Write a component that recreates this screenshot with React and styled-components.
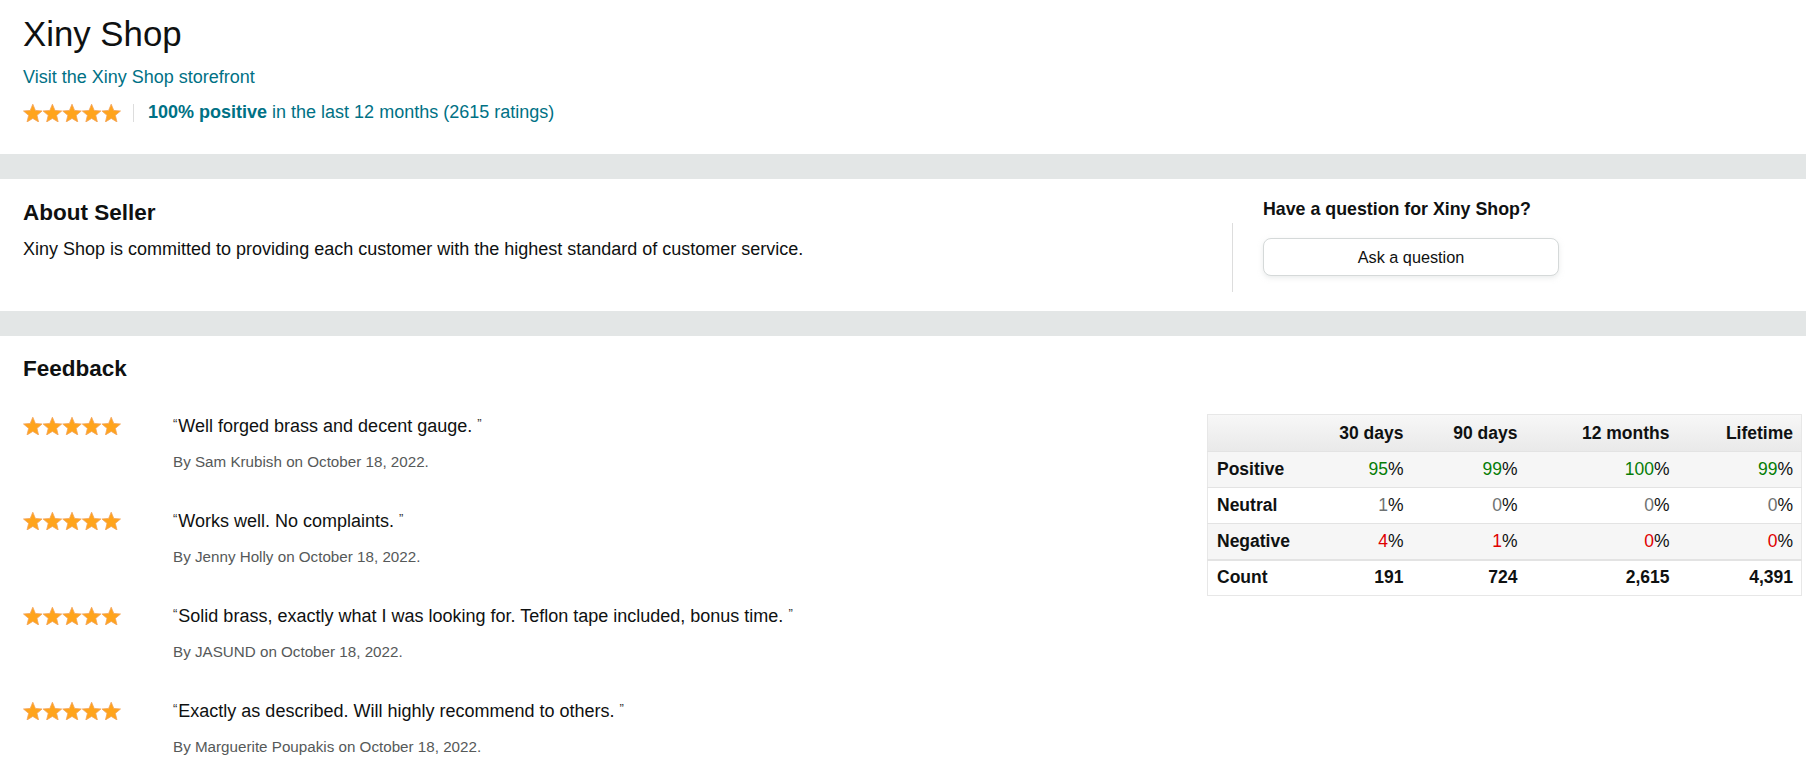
import React from 'react';
import styled, { createGlobalStyle } from 'styled-components';

const GlobalStyle = createGlobalStyle`
  html, body { margin: 0; padding: 0; background: #fff; }
  body {
    font-family: "Liberation Sans", Arial, sans-serif;
    color: #0f1111;
    font-size: 18px;
    line-height: 25px;
  }
  * { box-sizing: border-box; }
`;

const Page = styled.div`
  width: 100%;
`;

const Header = styled.header`
  padding: 13px 23px 29px;
`;

const ShopTitle = styled.h1`
  margin: 0;
  font-size: 34.8px;
  line-height: 42px;
  font-weight: 400;
  color: #0f1111;
`;

const StoreLink = styled.a`
  display: block;
  margin-top: 10px;
  color: #007185;
  text-decoration: none;
  font-size: 18px;
  line-height: 25px;
`;

const RatingRow = styled.div`
  display: flex;
  align-items: center;
  margin-top: 10px;
  height: 25px;
  color: #007185;
  font-size: 18px;
`;

const Sep = styled.span`
  width: 1px;
  height: 18px;
  background: #dddddd;
  margin: 0 14px 0 12px;
`;

const Strong = styled.b`
  font-weight: 700;
`;

const Band = styled.div`
  height: 25px;
  background: #e3e6e6;
`;

const AboutSection = styled.section`
  display: flex;
  align-items: flex-start;
  padding-left: 23px;
`;

const AboutMain = styled.div`
  flex: 1;
  padding-top: 20px;
`;

const SectionTitle = styled.h3`
  margin: 0;
  font-size: 22.5px;
  line-height: 28px;
  font-weight: 700;
`;

const Description = styled.p`
  margin: 10px 0 0;
  font-size: 18px;
`;

const Aside = styled.aside`
  width: 574px;
  display: flex;
  align-items: flex-start;
  padding-bottom: 19px;
`;

const VDivider = styled.div`
  width: 1px;
  height: 69px;
  margin-top: 44px;
  background: #dddddd;
`;

const QuestionBox = styled.div`
  margin-left: 30px;
  padding-top: 18px;
  width: 296px;
`;

const QuestionTitle = styled.h4`
  margin: 0;
  font-size: 17.8px;
  line-height: 25px;
  font-weight: 700;
`;

const AskButton = styled.button`
  display: block;
  margin-top: 16px;
  width: 296px;
  height: 38px;
  border: 1px solid #d5d9d9;
  border-radius: 8px;
  background: #fff;
  box-shadow: 0 2px 5px 0 rgba(213, 217, 217, 0.5);
  font-family: "Liberation Sans", Arial, sans-serif;
  font-size: 16.25px;
  color: #0f1111;
  cursor: pointer;
`;

const FeedbackSection = styled.section`
  padding: 19px 4px 0 23px;
`;

const FeedbackBody = styled.div`
  display: flex;
  align-items: flex-start;
  margin-top: 31px;
`;

const ReviewList = styled.div`
  flex: 1;
  display: flex;
  flex-direction: column;
  gap: 37px;
`;

const Review = styled.div`
  display: grid;
  grid-template-columns: 150px 1fr;
`;

const StarSvg = styled.svg`
  display: block;
  margin-top: ${(p) => p.$offset || 0}px;
`;

const Quote = styled.div`
  font-size: 18px;
  line-height: 25px;
  height: 25px;
`;

const QMark = styled.span`
  position: relative;
  top: -4px;
  font-size: 13px;
  line-height: 0;
  color: #333;
  margin-right: 1px;
`;

const ByLine = styled.div`
  margin-top: 13px;
  font-size: 15.2px;
  line-height: 20px;
  color: #565959;
`;

const Table = styled.table`
  width: 594px;
  table-layout: fixed;
  border-collapse: collapse;
  border: 1px solid #e7e7e7;
`;

const HeadRow = styled.tr`
  height: 37px;
  background: linear-gradient(to bottom, #f7f7f7, #e9e9e9);
`;

const Row = styled.tr`
  height: 36px;
  background: ${(p) => (p.$striped ? '#f6f6f6' : '#fff')};
  border-top: ${(p) => (p.$thick ? '2px' : '1px')} solid #e3e3e3;
`;

const Th = styled.th`
  padding: 0 8px 0 9px;
  text-align: right;
  font-weight: 700;
  font-size: 17.5px;
`;

const Cell = styled.td`
  padding: 0 8px 0 9px;
  text-align: ${(p) => (p.$label ? 'left' : 'right')};
  font-weight: ${(p) => (p.$bold ? 700 : 400)};
  font-size: 17.5px;
  white-space: nowrap;
`;

const Digits = styled.span`
  color: ${(p) => p.$color};
`;

function starPoints(cx, cy, R, r) {
  const pts = [];
  for (let k = 0; k < 10; k++) {
    const a = ((-90 + 36 * k) * Math.PI) / 180;
    const rad = k % 2 === 0 ? R : r;
    pts.push(`${(cx + rad * Math.cos(a)).toFixed(2)},${(cy + rad * Math.sin(a)).toFixed(2)}`);
  }
  return pts.join(' ');
}

const Stars = ({ offset }) => (
  <StarSvg $offset={offset} viewBox="0 0 98 18" width="98" height="18">
    {[0, 1, 2, 3, 4].map((i) => (
      <polygon
        key={i}
        points={starPoints(9.8 + 19.6 * i, 10, 9.8, 4.4)}
        fill="#ffa41c"
        stroke="#f3a35a"
        strokeWidth="0.8"
        strokeLinejoin="round"
      />
    ))}
  </StarSvg>
);

const reviews = [
  { text: 'Well forged brass and decent gauge.', by: 'Sam Krubish' },
  { text: 'Works well. No complaints.', by: 'Jenny Holly' },
  { text: 'Solid brass, exactly what I was looking for. Teflon tape included, bonus time.', by: 'JASUND' },
  { text: 'Exactly as described. Will highly recommend to others.', by: 'Marguerite Poupakis' },
];

const GREEN = '#067d06';
const GRAY = '#6f7373';
const RED = '#e00000';

const rows = [
  { label: 'Positive', color: GREEN, values: ['95', '99', '100', '99'], striped: true },
  { label: 'Neutral', color: GRAY, values: ['1', '0', '0', '0'] },
  { label: 'Negative', color: RED, values: ['4', '1', '0', '0'], striped: true },
];

export default function App() {
  return (
    <Page>
      <GlobalStyle />
      <Header>
        <ShopTitle>Xiny Shop</ShopTitle>
        <StoreLink href="#">Visit the Xiny Shop storefront</StoreLink>
        <RatingRow>
          <Stars />
          <Sep />
          <span>
            <Strong>100% positive</Strong> in the last 12 months (2615 ratings)
          </span>
        </RatingRow>
      </Header>
      <Band />
      <AboutSection>
        <AboutMain>
          <SectionTitle>About Seller</SectionTitle>
          <Description>
            Xiny Shop is committed to providing each customer with the highest standard of customer service.
          </Description>
        </AboutMain>
        <Aside>
          <VDivider />
          <QuestionBox>
            <QuestionTitle>Have a question for Xiny Shop?</QuestionTitle>
            <AskButton type="button">Ask a question</AskButton>
          </QuestionBox>
        </Aside>
      </AboutSection>
      <Band />
      <FeedbackSection>
        <SectionTitle>Feedback</SectionTitle>
        <FeedbackBody>
          <ReviewList>
            {reviews.map((r) => (
              <Review key={r.by}>
                <Stars offset={3} />
                <div>
                  <Quote>
                    <QMark>“</QMark>
                    {r.text} <QMark>”</QMark>
                  </Quote>
                  <ByLine>By {r.by} on October 18, 2022.</ByLine>
                </div>
              </Review>
            ))}
          </ReviewList>
          <Table>
            <colgroup>
              <col style={{ width: 92 }} />
              <col style={{ width: 112 }} />
              <col style={{ width: 114 }} />
              <col style={{ width: 152 }} />
              <col style={{ width: 124 }} />
            </colgroup>
            <thead>
              <HeadRow>
                <Th />
                <Th>30 days</Th>
                <Th>90 days</Th>
                <Th>12 months</Th>
                <Th>Lifetime</Th>
              </HeadRow>
            </thead>
            <tbody>
              {rows.map((row) => (
                <Row key={row.label} $striped={row.striped}>
                  <Cell $label $bold>{row.label}</Cell>
                  {row.values.map((v, i) => (
                    <Cell key={i}>
                      <Digits $color={row.color}>{v}</Digits>%
                    </Cell>
                  ))}
                </Row>
              ))}
              <Row $thick>
                <Cell $label $bold>Count</Cell>
                <Cell $bold>191</Cell>
                <Cell $bold>724</Cell>
                <Cell $bold>2,615</Cell>
                <Cell $bold>4,391</Cell>
              </Row>
            </tbody>
          </Table>
        </FeedbackBody>
      </FeedbackSection>
    </Page>
  );
}
